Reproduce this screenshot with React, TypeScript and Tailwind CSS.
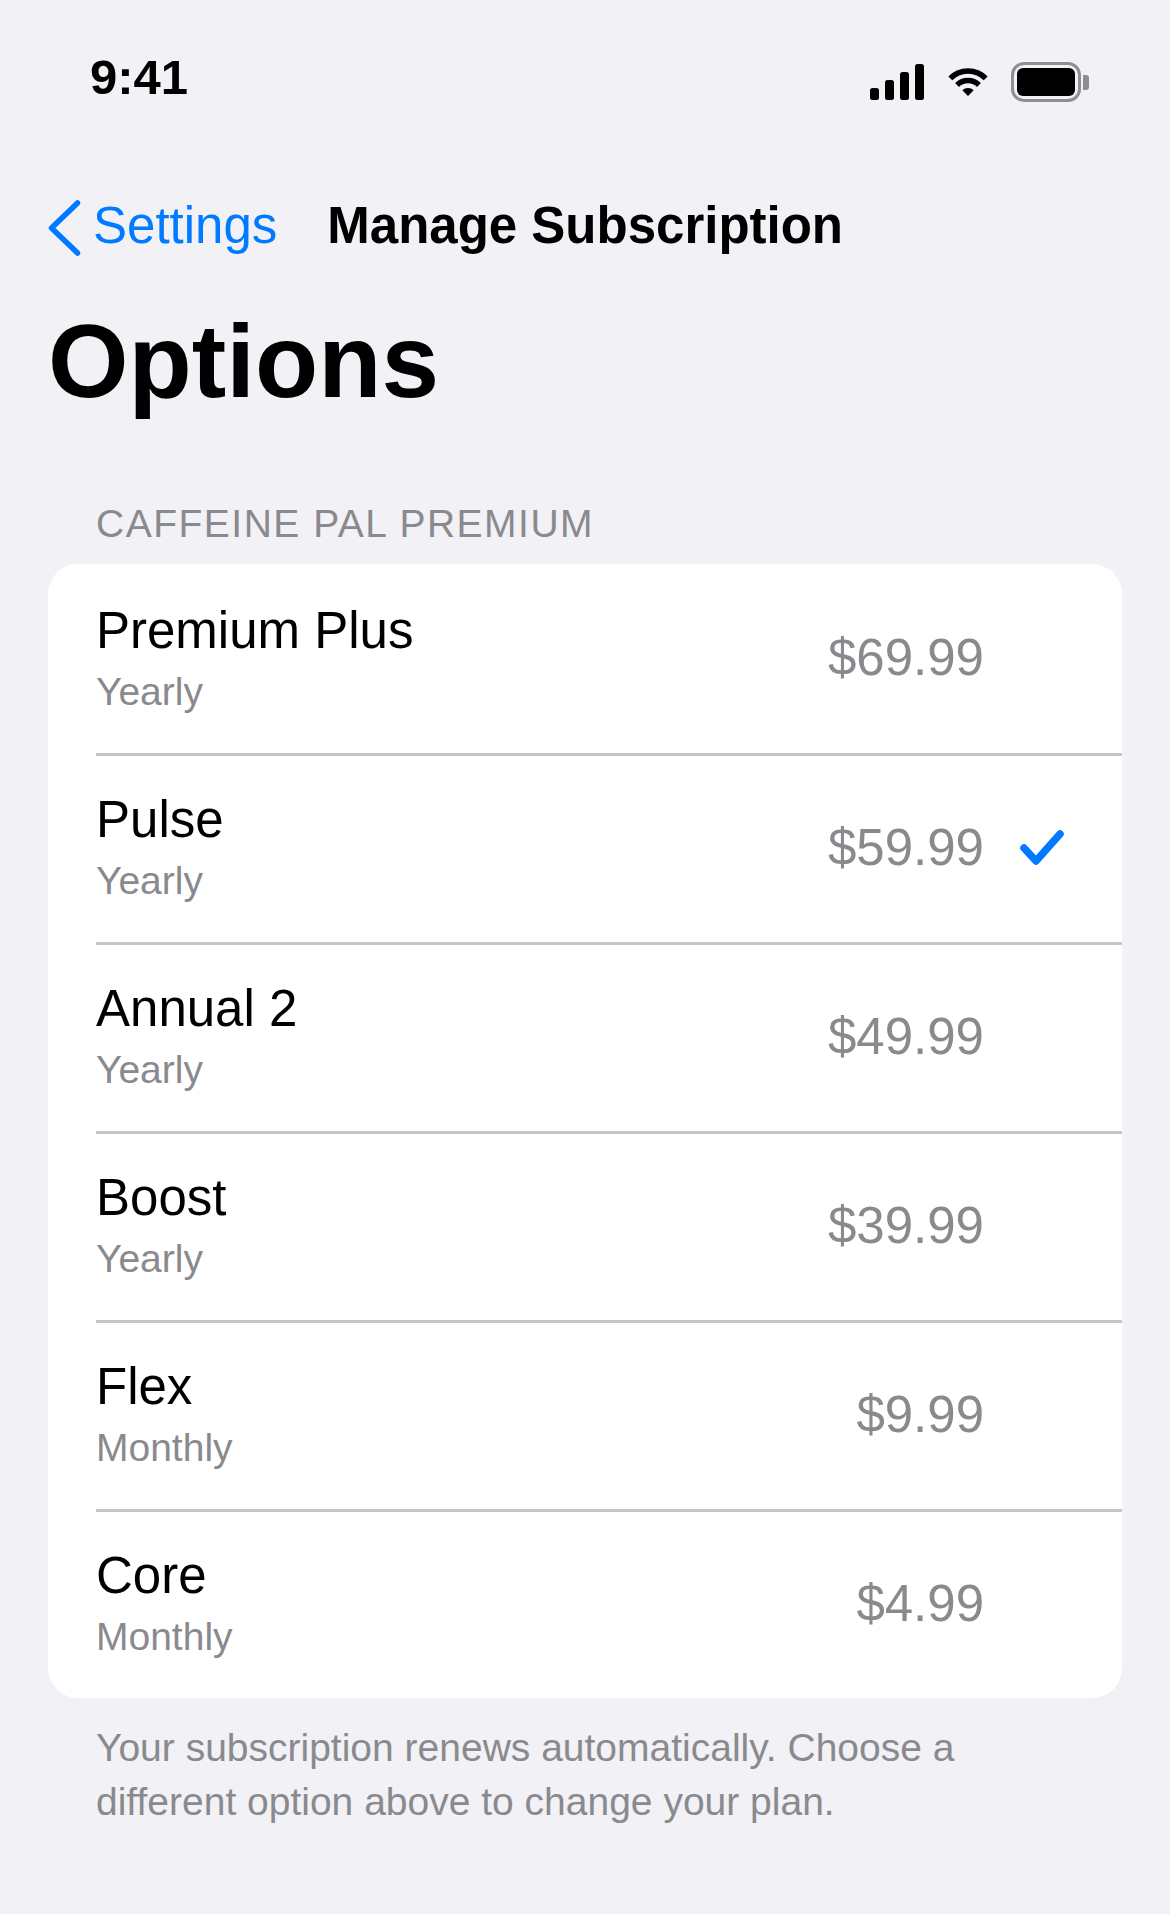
const plans = [
  { name: 'Premium Plus', period: 'Yearly', price: '$69.99' },
  { name: 'Pulse', period: 'Yearly', price: '$59.99', selected: true },
  { name: 'Annual 2', period: 'Yearly', price: '$49.99' },
  { name: 'Boost', period: 'Yearly', price: '$39.99' },
  { name: 'Flex', period: 'Monthly', price: '$9.99' },
  { name: 'Core', period: 'Monthly', price: '$4.99' },
]

function StatusIcons() {
  return (
    <div className="flex items-center">
      <svg width="56" height="37" viewBox="0 0 56 37" className="block">
        <rect x="1" y="24" width="9" height="12" rx="2.5" />
        <rect x="16" y="16" width="9" height="20" rx="2.5" />
        <rect x="31" y="8" width="9" height="28" rx="2.5" />
        <rect x="46" y="0" width="9" height="36" rx="2.5" />
      </svg>
      <svg width="40" height="32" viewBox="0 0 40 32" className="block ml-[23px]">
        <path d="M2.32 12.32 A25 25 0 0 1 37.68 12.32" fill="none" stroke="#000" strokeWidth="5.5" />
        <path d="M9.04 19.04 A15.5 15.5 0 0 1 30.96 19.04" fill="none" stroke="#000" strokeWidth="5.5" />
        <path d="M20 30 L14.34 24.34 A8 8 0 0 1 25.66 24.34 Z" />
      </svg>
      <div className="ml-[23px] w-[70px] h-[40px] rounded-[13px] border-[3px] border-[#8e8e93] p-[3px]">
        <div className="w-full h-full rounded-[6px] bg-black" />
      </div>
      <div className="ml-[2px] w-[6px] h-[15px] rounded-r-[3px] bg-[#8e8e93]" />
    </div>
  )
}

export default function App() {
  return (
    <div className="w-[1170px] h-[1914px] bg-[#f1f1f6] font-['Liberation_Sans',Arial,sans-serif] text-black overflow-hidden">
      <div className="flex items-center justify-between h-[40px] mt-[57px] pl-[90px] pr-[81px]">
        <span className="text-[49px] font-bold leading-[48px]">9:41</span>
        <div className="mt-[10px]">
          <StatusIcons />
        </div>
      </div>

      <div className="flex items-center h-[60px] mt-[99px] pl-[48px]">
        <svg width="34" height="56" viewBox="0 0 34 56" className="block mt-[3px]">
          <path d="M29.5 3 L3.5 28 L29.5 53" fill="none" stroke="#007aff" strokeWidth="5.5" strokeLinecap="round" strokeLinejoin="round" />
        </svg>
        <span className="ml-[11px] text-[51px] leading-[60px] text-[#007aff]">Settings</span>
        <span className="ml-[50px] text-[51px] leading-[60px] font-bold">Manage Subscription</span>
      </div>

      <h1 className="mt-[45px] pl-[48px] text-[103.5px] leading-[120px] font-bold">Options</h1>

      <div className="mt-[79px] pl-[96px] text-[39px] leading-[48px] tracking-[1.5px] text-[#8a8a8e]">CAFFEINE PAL PREMIUM</div>

      <div className="mt-[16px] mx-[48px] bg-white rounded-[30px] overflow-hidden">
        {plans.map((plan, i) => (
          <div key={plan.name} className="flex pl-[48px]">
            <div className={`flex-1 flex items-center justify-between pb-[2px] ${i === 0 ? 'h-[192px]' : i < plans.length - 1 ? 'h-[189px]' : 'h-[186px]'} ${i < plans.length - 1 ? 'border-b-[3px] border-[#c6c6c8]' : ''}`}>
              <div className={i === 0 ? 'pt-[1px]' : 'pb-[2px]'}>
                <div className="text-[51px] leading-[60px]">{plan.name}</div>
                <div className="mt-[8px] text-[39px] leading-[46px] text-[#8a8a8e]">{plan.period}</div>
              </div>
              <div className="flex items-center">
                <span className="text-[51px] leading-[60px] text-[#8a8a8e]">{plan.price}</span>
                <div className="w-[138px] pl-[35px]">
                  {plan.selected && (
                    <svg width="46" height="36" viewBox="0 0 46 36" className="block">
                      <path d="M5 18 L17 31 L41 4" fill="none" stroke="#007aff" strokeWidth="7.5" strokeLinecap="round" strokeLinejoin="round" />
                    </svg>
                  )}
                </div>
              </div>
            </div>
          </div>
        ))}
      </div>

      <p className="mt-[23px] pl-[96px] w-[1000px] text-[39px] leading-[54px] text-[#8a8a8e]">
        Your subscription renews automatically. Choose a
        <br />
        different option above to change your plan.
      </p>
    </div>
  )
}
